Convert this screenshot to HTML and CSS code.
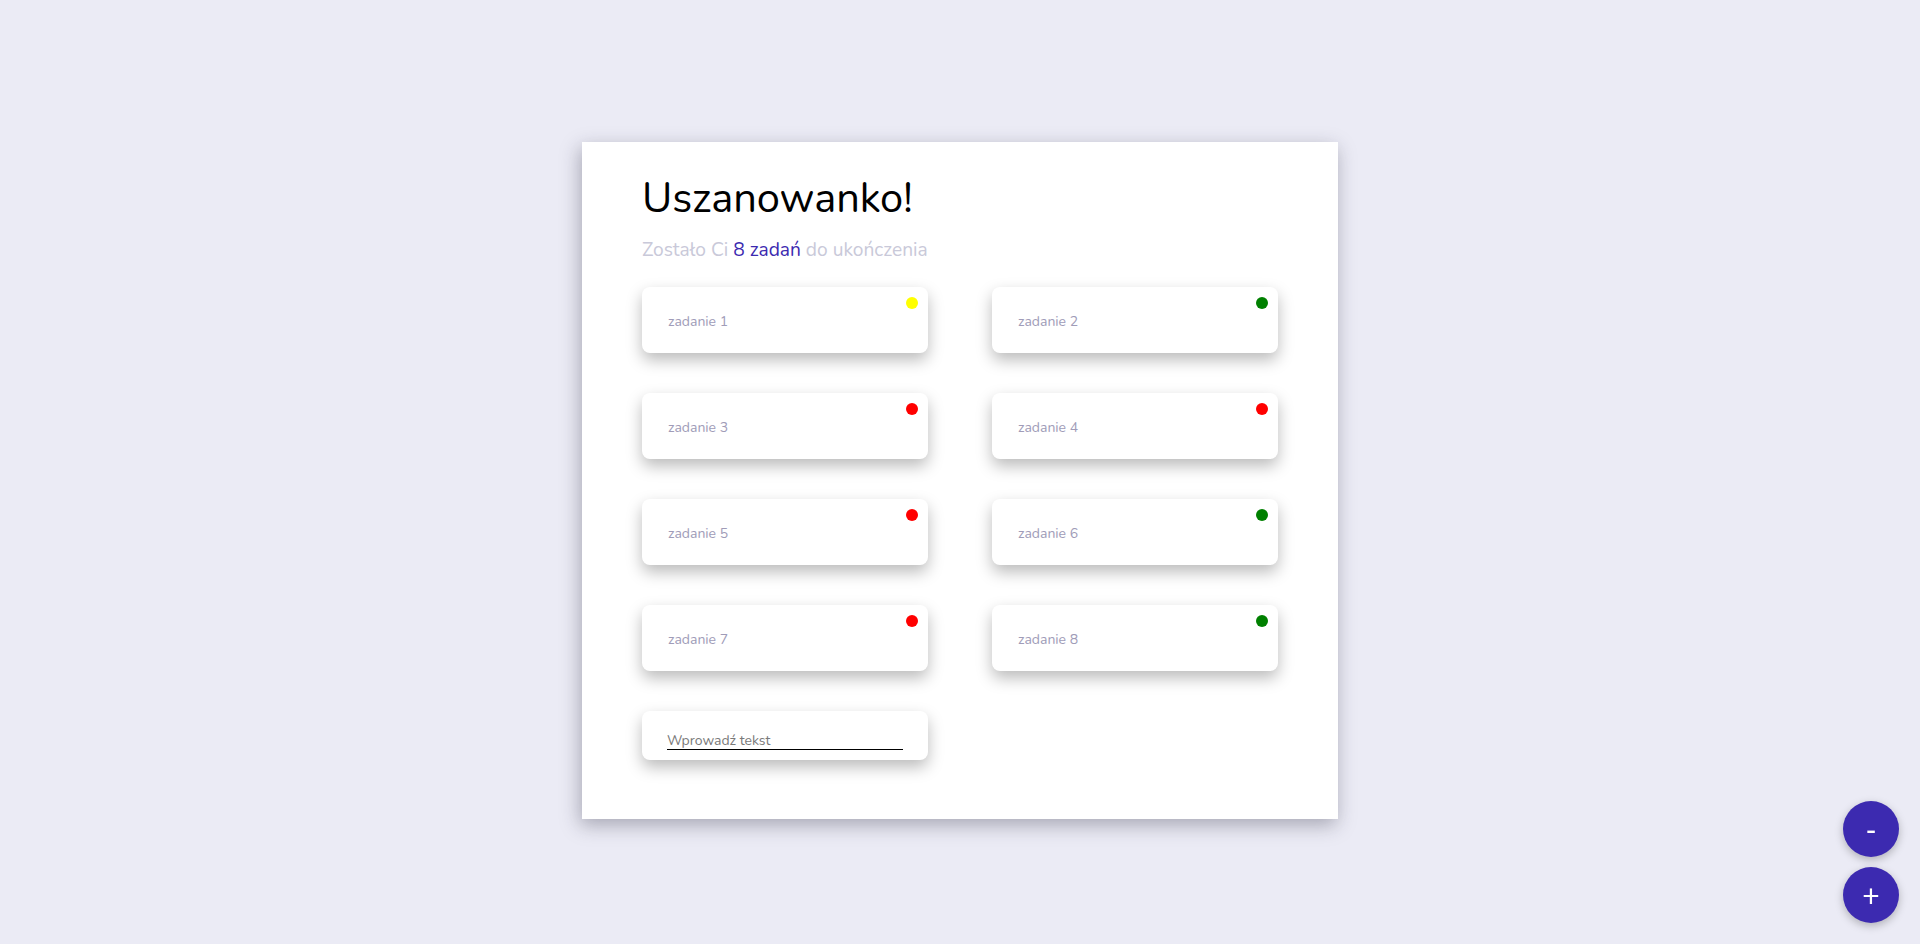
FILE: index.html
```html
<!DOCTYPE html>
<html lang="pl">
<head>
<meta charset="utf-8">
<title>Uszanowanko</title>
<link rel="stylesheet" href="styles.css">
</head>
<body>
<main class="panel">
  <h1 class="title">Uszanowanko!</h1>
  <p class="subtitle">Zostało Ci <span class="count">8 zadań</span> do ukończenia</p>
  <div class="tasks">
    <div class="task"><span class="task-name">zadanie 1</span><span class="dot dot-yellow"></span></div>
    <div class="task"><span class="task-name">zadanie 2</span><span class="dot dot-green"></span></div>
    <div class="task"><span class="task-name">zadanie 3</span><span class="dot dot-red"></span></div>
    <div class="task"><span class="task-name">zadanie 4</span><span class="dot dot-red"></span></div>
    <div class="task"><span class="task-name">zadanie 5</span><span class="dot dot-red"></span></div>
    <div class="task"><span class="task-name">zadanie 6</span><span class="dot dot-green"></span></div>
    <div class="task"><span class="task-name">zadanie 7</span><span class="dot dot-red"></span></div>
    <div class="task"><span class="task-name">zadanie 8</span><span class="dot dot-green"></span></div>
    <div class="task task-input"><input class="text-input" type="text" placeholder="Wprowadź tekst"></div>
  </div>
</main>
<div class="fab-stack">
  <button class="fab" type="button">-</button>
  <button class="fab" type="button">+</button>
</div>
</body>
</html>
```
FILE: styles.css
```css
html, body {
  margin: 0;
  padding: 0;
}
body {
  background: #ebebf5;
  font-family: "Nunito", "Lato", "Noto Sans", sans-serif;
  min-height: 944px;
}
.panel {
  box-sizing: border-box;
  width: 756px;
  margin: 142px auto 0;
  padding: 33px 60px 59px;
  background: #ffffff;
  box-shadow: -2px 6px 18px rgba(40, 40, 60, 0.35);
}
.title {
  margin: 0;
  font-size: 41.6px;
  line-height: 48px;
  font-weight: 400;
  color: #000;
}
.subtitle {
  margin: 14px 0 0;
  font-size: 19.2px;
  line-height: 26px;
  color: #c9c9d9;
}
.count {
  color: #3c2ab0;
}
.tasks {
  display: grid;
  grid-template-columns: 286px 286px;
  column-gap: 64px;
  row-gap: 40px;
  margin-top: 24px;
}
.task {
  position: relative;
  box-sizing: border-box;
  height: 66px;
  padding: 0 26px;
  display: flex;
  align-items: center;
  background: #fff;
  border-radius: 8px;
  box-shadow: 0 7px 16px rgba(0, 0, 0, 0.27);
}
.task-name {
  font-size: 14px;
  color: #a09cb8;
  padding-top: 2px;
}
.dot {
  position: absolute;
  top: 10px;
  right: 10px;
  width: 12px;
  height: 12px;
  border-radius: 50%;
}
.dot-yellow { background: #ffff00; }
.dot-green { background: #008000; }
.dot-red { background: #ff0000; }
.task-input {
  height: 49px;
  padding: 0 25px;
  align-items: flex-start;
}
.text-input {
  box-sizing: border-box;
  margin-top: 20px;
  width: 236px;
  height: 19px;
  padding: 0;
  border: 0;
  border-bottom: 1px solid #000;
  outline: none;
  background: transparent;
  font-family: "Nunito", "Lato", "Noto Sans", sans-serif;
  font-size: 14px;
  color: #555;
}
.text-input::placeholder {
  color: #7a7a7a;
}
.fab-stack {
  position: fixed;
  right: 21px;
  bottom: 21px;
  display: flex;
  flex-direction: column;
  gap: 10px;
}
.fab {
  width: 56px;
  height: 56px;
  padding: 0;
  border: 0;
  border-radius: 50%;
  background: #3c2ab0;
  color: #fff;
  font-family: "Lato", "Noto Sans", sans-serif;
  font-size: 30px;
  line-height: 56px;
  box-shadow: 0 3px 8px rgba(0, 0, 0, 0.25);
}
```
